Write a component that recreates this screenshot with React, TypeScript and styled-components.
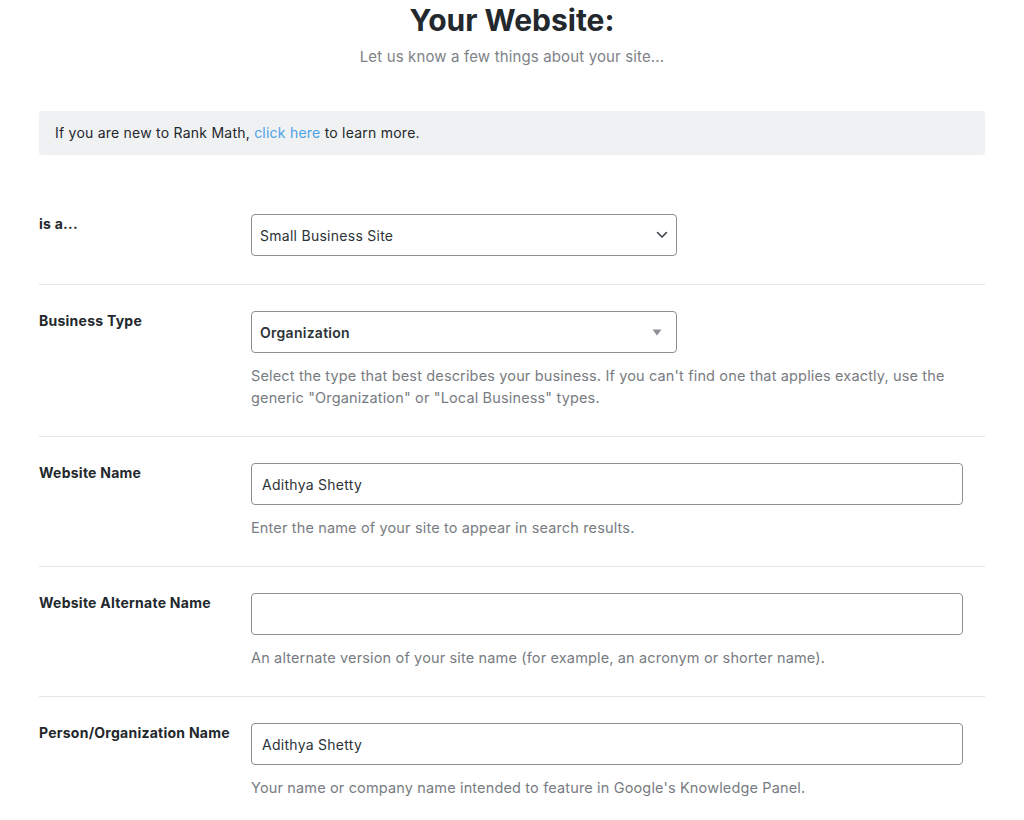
import React from "react";
import styled, { createGlobalStyle } from "styled-components";

const Global = createGlobalStyle`
  html, body { margin: 0; padding: 0; background: #fff; }
  body {
    font-family: Inter, "Noto Sans", "Liberation Sans", sans-serif;
    color: #23282d;
    -webkit-font-smoothing: antialiased;
  }
  * { box-sizing: border-box; }
`;

const Page = styled.div`
  width: 946px;
  margin: 0 auto;
`;

const Header = styled.header`
  display: flex;
  flex-direction: column;
  align-items: center;
`;

const Title = styled.h1`
  margin: 0;
  font-size: 30px;
  line-height: 40px;
  font-weight: 700;
  color: #23282d;
`;

const Subtitle = styled.p`
  margin: 6px 0 0;
  font-size: 15px;
  line-height: 22px;
  letter-spacing: 0.14px;
  color: #7e8288;
`;

const Notice = styled.div`
  margin-top: 43px;
  height: 44px;
  padding: 0 16px;
  background: #f0f1f3;
  border-radius: 3px;
  font-size: 14px;
  line-height: 44px;
  letter-spacing: 0.23px;
  color: #23282d;
`;

const Link = styled.a`
  color: #4ca2e4;
  text-decoration: none;
`;

const Form = styled.div`
  margin-top: 33px;
  display: flex;
  flex-direction: column;
`;

const Row = styled.div<{ $last?: boolean; $first?: boolean }>`
  display: grid;
  grid-template-columns: 212px 1fr;
  padding: 26px 0 ${(p) => (p.$first ? "28px" : "27px")};
  border-bottom: ${(p) => (p.$last ? "none" : "1px solid #e4e5e7")};
`;

const Label = styled.label`
  padding-top: 1px;
  font-size: 14px;
  line-height: 18px;
  font-weight: 700;
  letter-spacing: 0.25px;
  color: #23282d;
`;

const Field = styled.div`
  display: flex;
  flex-direction: column;
`;

const Box = styled.div<{ $wide?: boolean; $bold?: boolean }>`
  width: ${(p) => (p.$wide ? "712px" : "426px")};
  height: 42px;
  border: 1px solid #8c8f94;
  border-radius: 4px;
  background: #fff;
  display: flex;
  align-items: center;
  justify-content: space-between;
  padding: 0 8px 0 ${(p) => (p.$wide ? "10px" : "8px")};
  font-size: 14px;
  letter-spacing: 0.27px;
  font-weight: ${(p) => (p.$bold ? 600 : 400)};
  color: #2c3338;
`;

const Desc = styled.p`
  margin: 12px 0 0;
  font-size: 14.5px;
  line-height: 22px;
  letter-spacing: 0.15px;
  color: #787c82;
  max-width: 712px;
`;

const Chevron = () => (
  <svg width="12" height="8" viewBox="0 0 12 8" fill="none">
    <path d="M1.5 1.5 L6 6 L10.5 1.5" stroke="#3c434a" strokeWidth="1.6" strokeLinecap="round" strokeLinejoin="round" />
  </svg>
);

const Caret = () => (
  <svg width="10" height="7" viewBox="0 0 10 7" style={{ marginRight: 6 }}>
    <path d="M0.5 0.5 L9.5 0.5 L5 6.5 Z" fill="#8c8f94" />
  </svg>
);

export default function App() {
  return (
    <>
      <Global />
      <Page>
        <Header>
          <Title>Your Website:</Title>
          <Subtitle>Let us know a few things about your site...</Subtitle>
        </Header>
        <Notice>
          If you are new to Rank Math, <Link href="#">click here</Link> to learn more.
        </Notice>
        <Form>
          <Row $first>
            <Label>is a...</Label>
            <Field>
              <Box>
                <span>Small Business Site</span>
                <Chevron />
              </Box>
            </Field>
          </Row>
          <Row>
            <Label>Business Type</Label>
            <Field>
              <Box $bold>
                <span>Organization</span>
                <Caret />
              </Box>
              <Desc>
                Select the type that best describes your business. If you can't find one that applies exactly, use the
                generic "Organization" or "Local Business" types.
              </Desc>
            </Field>
          </Row>
          <Row>
            <Label>Website Name</Label>
            <Field>
              <Box $wide>
                <span>Adithya Shetty</span>
              </Box>
              <Desc>Enter the name of your site to appear in search results.</Desc>
            </Field>
          </Row>
          <Row>
            <Label>Website Alternate Name</Label>
            <Field>
              <Box $wide />
              <Desc>An alternate version of your site name (for example, an acronym or shorter name).</Desc>
            </Field>
          </Row>
          <Row $last>
            <Label>Person/Organization Name</Label>
            <Field>
              <Box $wide>
                <span>Adithya Shetty</span>
              </Box>
              <Desc>Your name or company name intended to feature in Google's Knowledge Panel.</Desc>
            </Field>
          </Row>
        </Form>
      </Page>
    </>
  );
}
